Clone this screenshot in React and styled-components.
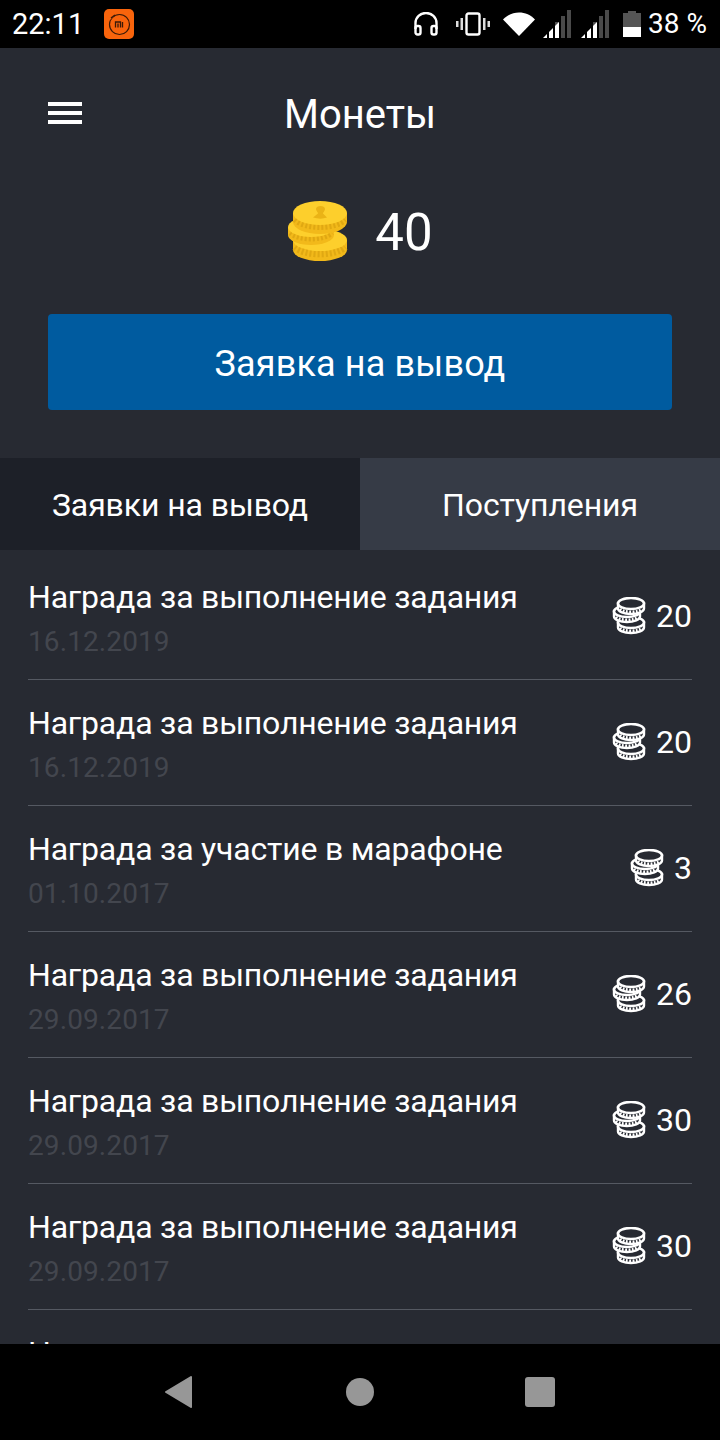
import styled, { createGlobalStyle } from 'styled-components';

const GlobalStyle = createGlobalStyle`
  html, body { margin: 0; padding: 0; background: #000; }
  * { box-sizing: border-box; }
  body { font-family: Roboto, "Noto Sans", sans-serif; }
`;

const Screen = styled.div`
  width: 720px;
  height: 1440px;
  display: flex;
  flex-direction: column;
  background: #272a32;
  color: #fff;
  overflow: hidden;
`;

const StatusBar = styled.div`
  height: 48px;
  flex: none;
  background: #000;
  display: flex;
  align-items: center;
  padding: 0 13px 0 12px;
`;

const Clock = styled.span`
  font-size: 29px;
  line-height: 48px;
  margin-right: 20px;
`;

const StatusRight = styled.div`
  margin-left: auto;
  display: flex;
  align-items: center;
`;

const Percent = styled.span`
  font-size: 28px;
  line-height: 48px;
  margin-left: 7px;
`;

const Header = styled.div`
  height: 133px;
  flex: none;
  display: flex;
  align-items: center;
  justify-content: center;
  position: relative;
`;

const Burger = styled.div`
  position: absolute;
  left: 48px;
  top: 54px;
  width: 34px;
  height: 22px;
  border-top: 4px solid #fff;
  border-bottom: 4px solid #fff;
  &::after {
    content: '';
    display: block;
    height: 4px;
    margin-top: 5px;
    background: #fff;
  }
`;

const Title = styled.h1`
  margin: 0;
  font-size: 40px;
  font-weight: 400;
  line-height: 44px;
`;

const Balance = styled.div`
  height: 102px;
  flex: none;
  display: flex;
  align-items: center;
  justify-content: center;
  gap: 26px;
  margin-top: 1px;
  margin-bottom: 30px;
`;

const BalanceValue = styled.span`
  font-size: 51px;
  line-height: 60px;
`;

const CoinStack = styled.svg`
  margin-bottom: 3px;
`;

const WithdrawButton = styled.button`
  display: block;
  flex: none;
  width: 624px;
  height: 96px;
  margin: 0 48px 48px;
  padding: 4px 0 0;
  border: 0;
  border-radius: 4px;
  background: #005b9f;
  color: #fff;
  font-family: inherit;
  font-size: 36px;
  letter-spacing: 0.15px;
`;

const Tabs = styled.div`
  display: flex;
  flex: none;
  height: 92px;
`;

const Tab = styled.div`
  flex: 1;
  display: flex;
  align-items: center;
  justify-content: center;
  padding-top: 1px;
  font-size: 32px;
  letter-spacing: -0.1px;
  background: ${props => (props.$active ? '#1d2028' : '#363b46')};
`;

const List = styled.div`
  flex: 1;
  min-height: 0;
  overflow: hidden;
  padding: 4px 28px 0;
`;

const Row = styled.div`
  height: 126px;
  display: flex;
  align-items: flex-start;
  justify-content: space-between;
  border-bottom: 1px solid #555962;
`;

const RowText = styled.div`
  padding-top: 22px;
`;

const RowTitle = styled.div`
  font-size: 32px;
  line-height: 42px;
  letter-spacing: -0.2px;
`;

const RowDate = styled.div`
  font-size: 28px;
  line-height: 46px;
  padding-top: 1px;
  color: #43464e;
  letter-spacing: 0.1px;
`;

const Reward = styled.div`
  display: flex;
  align-items: center;
  gap: 9px;
  height: 40px;
  margin-top: 42px;
  font-size: 32px;
`;

const NavBar = styled.div`
  height: 96px;
  flex: none;
  background: #000;
  display: flex;
  align-items: center;
  justify-content: center;
`;

const NavSlot = styled.div`
  width: 180px;
  display: flex;
  justify-content: center;
`;

const IconGap = styled.span`
  display: block;
  flex: none;
  width: ${props => props.$w}px;
`;

const rows = [
  ['Награда за выполнение задания', '16.12.2019', 20],
  ['Награда за выполнение задания', '16.12.2019', 20],
  ['Награда за участие в марафоне', '01.10.2017', 3],
  ['Награда за выполнение задания', '29.09.2017', 26],
  ['Награда за выполнение задания', '29.09.2017', 30],
  ['Награда за выполнение задания', '29.09.2017', 30],
  ['Награда за выполнение задания', '29.09.2017', 30],
];

function MiIcon() {
  return (
    <svg width="30" height="30" viewBox="0 0 30 30">
      <rect width="30" height="30" rx="5" fill="#f8640c" />
      <circle cx="15.500" cy="15.500" r="10" fill="none" stroke="#3a1a08" strokeWidth="1.200" />
      <path d="M4 10l6-6" stroke="#f8640c" strokeWidth="4" />
      <path d="M7 9l4-3" stroke="#3a1a08" strokeWidth="1.500" />
      <path d="M11.500 18.500v-5.500h5v5.500M14 14.500v4M18.500 13v5.500" fill="none" stroke="#3a1a08" strokeWidth="1.300" />
    </svg>
  );
}

function Signal() {
  return (
    <svg width="28" height="30" viewBox="0 0 28 30">
      <path d="M12 13h4v16h-4zM18 7h4v22h-4zM24 1h4v28h-4z" fill="#4a4a4a" />
      <path d="M0 29l4-4v4zM6 29v-6l4-4v10zM12 29V17l4-4v16z" fill="#fff" />
    </svg>
  );
}

function StatusIcons() {
  return (
    <>
      <svg width="26" height="24" viewBox="0 0 26 24" fill="none" stroke="#fff" strokeWidth="2.400">
        <path d="M2.500 17v-6a10.500 10 0 0 1 21 0v6" />
        <rect x="2.500" y="14" width="5" height="8.500" rx="2" />
        <rect x="18.500" y="14" width="5" height="8.500" rx="2" />
      </svg>
      <IconGap $w={17} />
      <svg width="34" height="24" viewBox="0 0 34 24">
        <rect x="10.500" y="1.500" width="13" height="21" rx="2" fill="none" stroke="#fff" strokeWidth="2.400" />
        <path d="M4.500 6h2.500v12H4.500zM27 6h2.500v12H27z" fill="#ddd" />
        <path d="M0 9h2.500v6H0zM31.500 9H34v6h-2.500z" fill="#ddd" />
      </svg>
      <IconGap $w={13} />
      <svg width="32" height="24" viewBox="0 0 32 24">
        <path d="M0 7.500C4 3 10 .5 16 .5s12 2.500 16 7L16 24z" fill="#fff" />
      </svg>
      <IconGap $w={8} />
      <Signal />
      <IconGap $w={10} />
      <Signal />
      <IconGap $w={14} />
      <svg width="18" height="26" viewBox="0 0 18 26">
        <path d="M5 0h8v2h5v24H0V2h5z" fill="#555" />
        <path d="M0 16h18v10H0z" fill="#fff" />
      </svg>
    </>
  );
}

function GoldCoin({ cx, cy, rx, ry, h }) {
  return (
    <g>
      <path d={`M${cx - rx} ${cy}v${h}a${rx} ${ry} 0 0 0 ${rx * 2} 0v-${h}z`} fill="#f2b91a" />
      <path
        d={`M${cx - rx + 2} ${cy + h / 2 + 2}a${rx} ${ry} 0 0 0 ${rx * 2 - 4} 0`}
        fill="none"
        stroke="#e0a812"
        strokeWidth={h - 3}
        strokeDasharray="2 2"
      />
      <ellipse cx={cx} cy={cy} rx={rx} ry={ry} fill="#fdcf2c" />
    </g>
  );
}

function GoldCoins() {
  return (
    <CoinStack width="62" height="62" viewBox="0 0 62 62">
      <GoldCoin cx={33} cy={39} rx={27} ry={11} h={10} />
      <GoldCoin cx={24} cy={26} rx={23} ry={10} h={8} />
      <GoldCoin cx={33} cy={12} rx={27} ry={12} h={9} />
      <path d="M29 8c0-4 9-4 9 0 0 2-2 3-2 4.500l4 4c-4 1.500-9 1.500-14 0l5-4c0-1.500-2-2.500-2-4.500z" fill="#eab316" />
    </CoinStack>
  );
}

function OutlineCoin({ cx, cy }) {
  return (
    <g>
      <path d={`M${cx - 13} ${cy}v5c0 3 5.800 5.500 13 5.500s13-2.500 13-5.500v-5z`} fill="#272a32" stroke="#fff" strokeWidth="2.400" />
      <path d={`M${cx - 11} ${cy + 5.500}c2 2.200 6.500 3 11 3s9-.8 11-3`} fill="none" stroke="#fff" strokeWidth="3" strokeDasharray="1.800 1.500" />
      <ellipse cx={cx} cy={cy} rx="13" ry="5.500" fill="#272a32" stroke="#fff" strokeWidth="2.600" />
    </g>
  );
}

function CoinsIcon() {
  return (
    <svg width="36" height="38" viewBox="0 0 36 38">
      <OutlineCoin cx={20} cy={25.500} />
      <OutlineCoin cx={16} cy={14.500} />
      <OutlineCoin cx={20} cy={6.500} />
    </svg>
  );
}

export default function App() {
  return (
    <>
      <GlobalStyle />
      <Screen>
        <StatusBar>
          <Clock>22:11</Clock>
          <MiIcon />
          <StatusRight>
            <StatusIcons />
            <Percent>38 %</Percent>
          </StatusRight>
        </StatusBar>
        <Header>
          <Burger />
          <Title>Монеты</Title>
        </Header>
        <Balance>
          <GoldCoins />
          <BalanceValue>40</BalanceValue>
        </Balance>
        <WithdrawButton>Заявка на вывод</WithdrawButton>
        <Tabs>
          <Tab $active>Заявки на вывод</Tab>
          <Tab>Поступления</Tab>
        </Tabs>
        <List>
          {rows.map(([title, date, amount], i) => (
            <Row key={i}>
              <RowText>
                <RowTitle>{title}</RowTitle>
                <RowDate>{date}</RowDate>
              </RowText>
              <Reward>
                <CoinsIcon />
                {amount}
              </Reward>
            </Row>
          ))}
        </List>
        <NavBar>
          <NavSlot>
            <svg width="32" height="34" viewBox="0 0 32 34">
              <path d="M27 2L2 17l25 15z" fill="#979797" stroke="#979797" strokeWidth="2" strokeLinejoin="round" />
            </svg>
          </NavSlot>
          <NavSlot>
            <svg width="28" height="28" viewBox="0 0 28 28"><circle cx="14" cy="14" r="14" fill="#979797" /></svg>
          </NavSlot>
          <NavSlot>
            <svg width="30" height="30" viewBox="0 0 30 30"><rect width="30" height="30" rx="3" fill="#979797" /></svg>
          </NavSlot>
        </NavBar>
      </Screen>
    </>
  );
}
